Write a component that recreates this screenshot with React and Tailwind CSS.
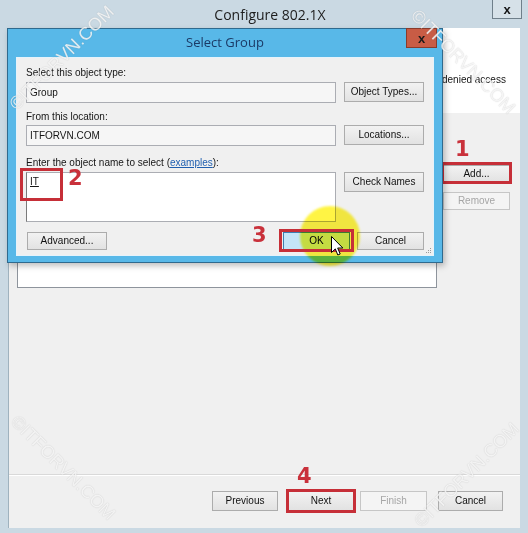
import React from 'react';

const cx = (...a) => a.filter(Boolean).join(' ');

function Btn({ children, className, disabled, focus }) {
  return (
    <div
      className={cx(
        'flex items-center justify-center border text-[10px] leading-none',
        disabled && 'border-[#c6c6c6] bg-[#f4f4f4] text-[#a6a6a6]',
        focus && 'border-[#3c7fb1] bg-[#c4e5f8] text-black',
        !disabled && !focus && 'border-[#acacac] bg-linear-to-b from-[#f2f2f2] to-[#e2e2e2] text-[#111]',
        className
      )}
    >
      {children}
    </div>
  );
}

function Digit({ children, className }) {
  return (
    <span className={cx("absolute z-40 font-['DejaVu_Sans',sans-serif] font-bold text-[21px] leading-none text-[#c9313b]", className)}>
      {children}
    </span>
  );
}

function Mark({ className }) {
  return (
    <span
      className={cx(
        "pointer-events-none absolute z-50 -translate-x-1/2 -translate-y-1/2 whitespace-nowrap font-['Liberation_Sans',sans-serif] text-[18px] text-white/80 [text-shadow:0_0_1px_rgba(90,90,90,0.35)]",
        className
      )}
    >
      ©ITFORVN.COM
    </span>
  );
}

export default function App() {
  return (
    <div className="relative flex h-[533px] w-[528px] flex-col overflow-hidden bg-[#cad9e3] font-['Liberation_Sans',Arial,sans-serif] text-[#151515]">
      {/* Configure 802.1X window title */}
      <div className="relative flex h-[28px] items-center justify-center pl-[12px]">
        <span className="font-['Open_Sans',sans-serif] text-[14px] text-[#1d1d1d]">Configure 802.1X</span>
        <div className="absolute right-[6px] top-0 flex h-[19px] w-[30px] items-center justify-center border border-t-0 border-[#6f7f8a] bg-[#d6e1e8] text-[13px] font-bold leading-none">
          x
        </div>
      </div>

      {/* wizard body */}
      <div className="mx-[8px] flex h-[500px] flex-col border-l border-[#9fb2be] bg-[#f0f0f0]">
        <div className="h-[85px] bg-white pl-[433px] pt-[38px]">
          <span className="whitespace-nowrap text-[10px] leading-[12px]">denied access</span>
        </div>

        <div className="flex h-[361px] items-start">
          <div className="ml-[8px] mt-[37px] h-[138px] w-[420px] border border-[#8e949c] bg-white" />
          <div className="ml-[6px] mt-[52px] flex flex-col gap-[9px]">
            <div className="relative">
              <Btn className="h-[18px] w-[67px]">Add...</Btn>
              <div className="absolute -bottom-[1px] -left-[2px] -right-[2px] -top-[3px] border-[3px] border-[#c62f38]" />
            </div>
            <Btn disabled className="h-[18px] w-[67px]">Remove</Btn>
          </div>
        </div>

        <div className="h-px bg-[#d9d9d9]" />
        <div className="h-px bg-white" />

        <div className="flex pl-[203px] pt-[15px]">
          <Btn className="h-[20px] w-[66px]">Previous</Btn>
          <div className="relative ml-[10px]">
            <Btn className="h-[20px] w-[66px]">Next</Btn>
            <div className="absolute -bottom-[2px] -left-[2px] -right-[2px] -top-[2px] border-[3px] border-[#c62f38]" />
          </div>
          <Btn disabled className="ml-[6px] h-[20px] w-[67px]">Finish</Btn>
          <Btn className="ml-[11px] h-[20px] w-[65px]">Cancel</Btn>
        </div>
      </div>

      {/* Select Group dialog */}
      <div className="absolute left-[7px] top-[28px] z-10 flex h-[235px] w-[436px] flex-col border border-[#2f6a8e] bg-[#58b8e8] shadow-[2px_3px_6px_rgba(0,0,0,0.25)]">
        <div className="relative flex h-[28px] items-center justify-center">
          <span className="font-['Open_Sans',sans-serif] text-[13px] text-[#1b3a66]">Select Group</span>
          <div className="absolute -top-px right-[5px] flex h-[20px] w-[31px] items-center justify-center border border-[#8a3b2b] bg-[#c85c45] text-[13px] font-bold leading-none text-[#1a1a1a]">
            x
          </div>
        </div>

        <div className="relative mx-[8px] h-[199px] border border-[#e6f3fb] bg-[#f0f0f0] pl-[9px] pt-[9px]">
          <div className="w-[398px]">
            <div className="text-[10px] leading-[12px]">Select this object type:</div>
            <div className="mt-[3px] flex items-start">
              <div className="flex h-[21px] w-[310px] items-center border border-[#abadb3] bg-[#f6f6f6] pl-[3px] text-[10px]">Group</div>
              <Btn className="ml-[8px] h-[20px] w-[80px]">Object Types...</Btn>
            </div>

            <div className="mt-[8px] text-[10px] leading-[12px]">From this location:</div>
            <div className="mt-[2px] flex items-start">
              <div className="flex h-[21px] w-[310px] items-center border border-[#abadb3] bg-[#f6f6f6] pl-[3px] text-[10px]">ITFORVN.COM</div>
              <Btn className="ml-[8px] h-[20px] w-[80px]">Locations...</Btn>
            </div>

            <div className="mt-[11px] text-[10px] leading-[12px]">
              Enter the object name to select (<span className="text-[#1f5fb0] underline">examples</span>):
            </div>
            <div className="mt-[3px] flex items-start">
              <div className="h-[50px] w-[310px] border border-[#abadb3] border-l-[#7a7a7a] bg-white pl-[3px] pt-[3px] text-[10px] leading-[12px]">
                <span className="underline">IT</span>
              </div>
              <Btn className="ml-[8px] h-[20px] w-[80px]">Check Names</Btn>
            </div>

            <div className="mt-[10px] flex items-start">
              <Btn className="ml-px h-[18px] w-[80px]">Advanced...</Btn>
              <div className="flex-1" />
              <Btn focus className="h-[18px] w-[67px]">OK</Btn>
              <Btn className="ml-[7px] h-[18px] w-[67px]">Cancel</Btn>
            </div>
          </div>

          <svg className="absolute bottom-[1px] right-[1px]" width="6" height="6" viewBox="0 0 6 6">
            <rect x="4" y="0" width="1" height="1" fill="#9a9a9a" />
            <rect x="2" y="2" width="1" height="1" fill="#9a9a9a" />
            <rect x="4" y="2" width="1" height="1" fill="#9a9a9a" />
            <rect x="0" y="4" width="1" height="1" fill="#9a9a9a" />
            <rect x="2" y="4" width="1" height="1" fill="#9a9a9a" />
            <rect x="4" y="4" width="1" height="1" fill="#9a9a9a" />
          </svg>
        </div>
      </div>

      {/* annotations */}
      <div className="pointer-events-none absolute left-[20px] top-[168px] z-30 h-[33px] w-[43px] border-[3px] border-[#c62f38]" />
      <div className="pointer-events-none absolute left-[300px] top-[206px] z-20 h-[60px] w-[60px] rounded-full bg-[#fff43a] opacity-95 mix-blend-multiply blur-[1px]" />
      <div className="pointer-events-none absolute left-[279px] top-[229px] z-30 h-[23px] w-[75px] border-[3px] border-[#c62f38]" />

      <Digit className="left-[455px] top-[139px]">1</Digit>
      <Digit className="left-[68px] top-[168px]">2</Digit>
      <Digit className="left-[252px] top-[225px]">3</Digit>
      <Digit className="left-[297px] top-[466px]">4</Digit>

      <svg className="absolute left-[331px] top-[236px] z-40" width="13" height="21" viewBox="0 0 13 21">
        <path d="M0.5 0.5 L0.5 16.5 L4.3 12.9 L6.8 19 L9.2 18 L6.7 12 L11.8 12 Z" fill="white" stroke="black" strokeWidth="1" strokeLinejoin="miter" />
      </svg>

      <Mark className="left-[62px] top-[58px] -rotate-45" />
      <Mark className="left-[463px] top-[62px] rotate-45" />
      <Mark className="left-[63px] top-[468px] rotate-45" />
      <Mark className="left-[467px] top-[475px] -rotate-45" />
    </div>
  );
}
